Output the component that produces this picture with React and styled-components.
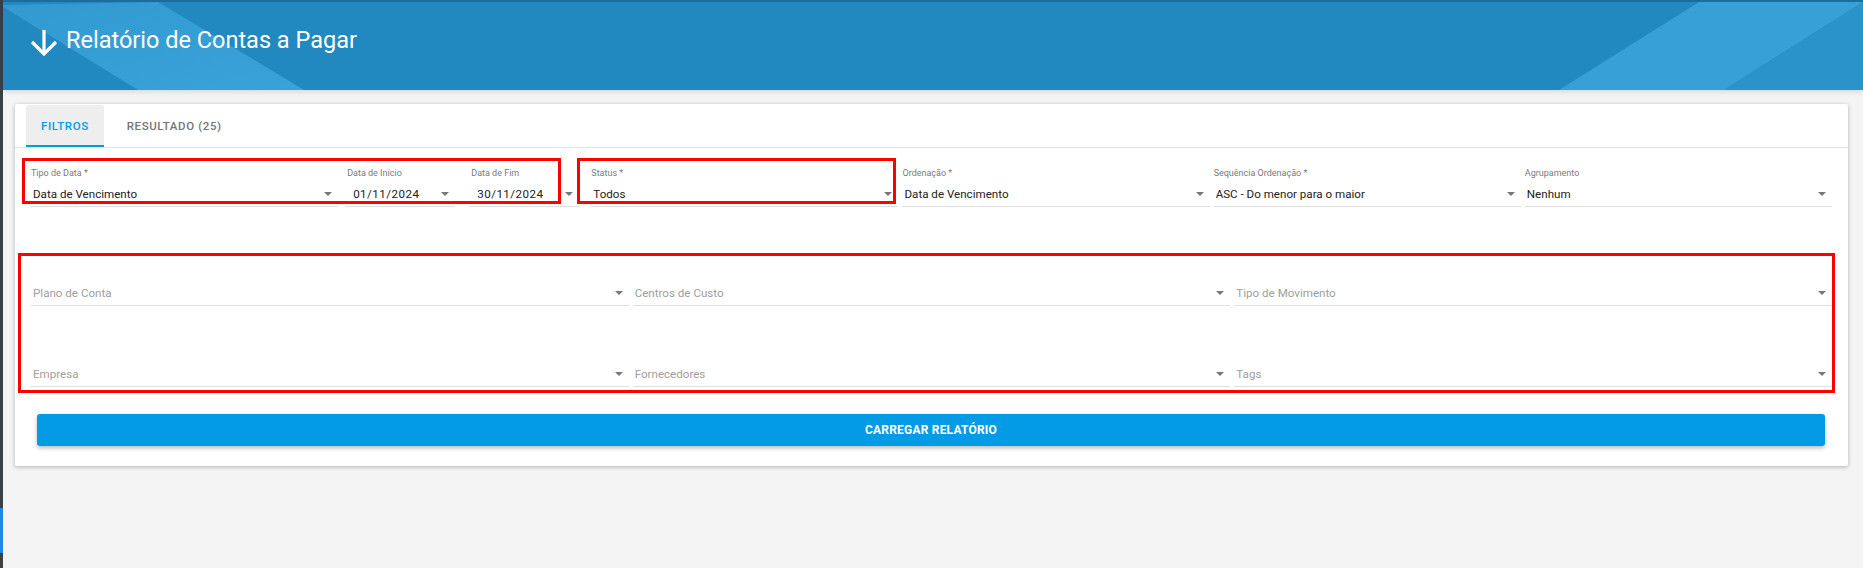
import React from 'react';
import styled, { createGlobalStyle } from 'styled-components';

const GlobalStyle = createGlobalStyle`
  html, body {
    margin: 0;
    padding: 0;
    background: #f4f4f4;
  }
  body {
    font-family: Roboto, "Liberation Sans", Arial, sans-serif;
  }
  * {
    box-sizing: border-box;
  }
`;

const mainFilters = [
  { label: 'Ordenação *', value: 'Data de Vencimento' },
  { label: 'Sequência Ordenação *', value: 'ASC - Do menor para o maior' },
  { label: 'Agrupamento', value: 'Nenhum' },
];

const extraFilters = [
  'Plano de Conta',
  'Centros de Custo',
  'Tipo de Movimento',
  'Empresa',
  'Fornecedores',
  'Tags',
];

const Select = ({ label, value, placeholder, $indent, $labelIndent, $spacing }) => (
  <Field>
    <Label $indent={$labelIndent}>{label}</Label>
    <ValueRow $indent={$indent}>
      <Value $placeholder={!value} $spacing={$spacing}>{value || placeholder}</Value>
      <Caret />
    </ValueRow>
  </Field>
);

const HeaderArt = () => (
  <Art viewBox="0 0 1860 90" preserveAspectRatio="none">
    <defs>
      <linearGradient id="band" x1="0" y1="0" x2="1" y2="1">
        <stop offset="0" stopColor="#319ad1" />
        <stop offset="1" stopColor="#3aa2d8" />
      </linearGradient>
    </defs>
    <polygon points="-3,3 155,0 301,90 135,90" fill="url(#band)" />
    <polygon points="1696,0 1860,0 1721,90 1556,90" fill="#37a0d6" />
    <polygon points="1860,0 1860,90 1721,90" fill="#2a93ca" />
  </Art>
);

const App = () => (
  <Page>
    <GlobalStyle />
    <Rail />
    <Content>
      <Header>
        <HeaderArt />
        <Title>
          <ArrowIcon width="28" height="26" viewBox="0 0 28 26" fill="none" stroke="#fff" strokeWidth="3.2">
            <path d="M14 0v24" />
            <path d="M2 12l12 12 12-12" />
          </ArrowIcon>
          Relatório de Contas a Pagar
        </Title>
      </Header>

      <Main>
        <Card>
          <Tabs>
            <Tab $active>FILTROS</Tab>
            <Tab>RESULTADO (25)</Tab>
          </Tabs>

          <Body>
            <FilterRow>
              <Marked $span={2} $cols="311fr 249fr" $inset="-9px 28px 3px -7px">
                <Select label="Tipo de Data *" value="Data de Vencimento" />
                <DateGroup>
                  <Select label="Data de Início" value="01/11/2024" $indent={8} $labelIndent={2} $spacing={0.45} />
                  <Select label="Data de Fim" value="30/11/2024" $indent={8} $labelIndent={2} $spacing={0.45} />
                </DateGroup>
              </Marked>
              <Marked $inset="-9px 4px 3px -12px">
                <Select label="Status *" value="Todos" />
              </Marked>
              {mainFilters.map((f) => (
                <Select key={f.label} label={f.label} value={f.value} />
              ))}
            </FilterRow>

            <Marked $inset="-13px -1px -6px -11px" $top={59}>
              <ExtraGrid>
                {extraFilters.map((p) => (
                  <Select key={p} placeholder={p} />
                ))}
              </ExtraGrid>
            </Marked>

            <LoadButton>CARREGAR RELATÓRIO</LoadButton>
          </Body>
        </Card>
      </Main>
    </Content>
  </Page>
);

const Page = styled.div`
  display: flex;
  min-height: 568px;
  background: #f4f4f4;
`;

const Rail = styled.div`
  width: 3px;
  flex-shrink: 0;
  background: linear-gradient(
    to bottom,
    #3b4047 0,
    #3b4047 508px,
    #1e88e5 508px,
    #1e88e5 553px,
    #3b4047 553px
  );
`;

const Content = styled.div`
  flex: 1;
  min-width: 0;
`;

const Header = styled.header`
  position: relative;
  z-index: 1;
  height: 90px;
  background: #2189c0;
  border-top: 2px solid #1d6c9b;
  overflow: hidden;
  box-shadow: 0 2px 5px rgba(0, 0, 0, 0.12);
`;

const Art = styled.svg`
  position: absolute;
  inset: 0;
  width: 100%;
  height: 100%;
`;

const Title = styled.h1`
  position: relative;
  display: flex;
  align-items: center;
  gap: 8px;
  height: 28px;
  margin: 24px 0 0;
  padding: 0 0 0 27px;
  color: #fff;
  font-size: 23.5px;
  font-weight: 400;
  line-height: 28px;
`;

const ArrowIcon = styled.svg`
  flex-shrink: 0;
  align-self: flex-end;
  margin-bottom: -2px;
`;

const Main = styled.main`
  padding: 14px 15px 0 12px;
`;

const Card = styled.section`
  background: #fff;
  border-radius: 2px;
  box-shadow: 0 1px 4px rgba(0, 0, 0, 0.28);
  padding-bottom: 20px;
`;

const Tabs = styled.nav`
  display: flex;
  align-items: flex-end;
  gap: 8px;
  height: 44px;
  padding: 0 11px;
  border-bottom: 1px solid #e3e3e3;
`;

const Tab = styled.div`
  display: flex;
  align-items: center;
  height: 42px;
  padding: 2px 15px 0;
  border-radius: 3px 3px 0 0;
  border-bottom: 2px solid ${(p) => (p.$active ? '#039be5' : 'transparent')};
  background: ${(p) => (p.$active ? '#eeeeee' : 'transparent')};
  color: ${(p) => (p.$active ? '#039be5' : '#757575')};
  font-size: 11.5px;
  font-weight: 500;
  letter-spacing: 0.6px;
`;

const Body = styled.div`
  padding: 0 14px;
`;

const FilterRow = styled.div`
  display: grid;
  grid-template-columns: 311fr 249fr 311fr 311fr 311fr 311fr;
  padding-top: 19px;
`;

const Marked = styled.div`
  position: relative;
  grid-column: span ${(p) => p.$span || 1};
  margin-top: ${(p) => p.$top || 0}px;
  ${(p) => p.$cols && `display: grid; grid-template-columns: ${p.$cols};`}

  &::after {
    content: '';
    position: absolute;
    inset: ${(p) => p.$inset};
    border: 3px solid #ff0000;
    pointer-events: none;
  }
`;

const DateGroup = styled.div`
  display: flex;
  gap: 10px;
  padding: 0 8px 0 3px;

  & > * {
    flex: 1;
    min-width: 0;
  }
`;

const Field = styled.div`
  display: flex;
  flex-direction: column;
  margin: 0 2px;
  min-width: 0;
`;

const Label = styled.div`
  height: 12px;
  padding-left: ${(p) => p.$indent || 0}px;
  color: #7a7a7a;
  font-size: 9px;
  line-height: 12px;
  white-space: nowrap;
`;

const ValueRow = styled.div`
  display: flex;
  align-items: center;
  height: 25px;
  margin-top: 3px;
  padding: 0 6px 0 ${(p) => p.$indent || 2}px;
  border-bottom: 1px solid #e0e0e0;
`;

const Value = styled.span`
  flex: 1;
  overflow: hidden;
  white-space: nowrap;
  color: ${(p) => (p.$placeholder ? '#9e9e9e' : '#212121')};
  font-size: 11.6px;
  letter-spacing: ${(p) => p.$spacing || 0}px;
`;

const Caret = styled.span`
  flex-shrink: 0;
  width: 0;
  height: 0;
  border-left: 4px solid transparent;
  border-right: 4px solid transparent;
  border-top: 4.5px solid #777;
`;

const ExtraGrid = styled.div`
  display: grid;
  grid-template-columns: repeat(3, 1fr);
  row-gap: 41px;
`;

const LoadButton = styled.button`
  display: block;
  width: calc(100% - 17px);
  height: 32px;
  margin: 27px 9px 0 8px;
  border: none;
  border-radius: 3px;
  background: #039be5;
  box-shadow: 0 2px 4px rgba(0, 0, 0, 0.28);
  color: #fff;
  font-family: Roboto, "Liberation Sans", Arial, sans-serif;
  font-size: 12px;
  font-weight: 700;
  letter-spacing: 0.2px;
  cursor: pointer;
`;

export default App;
